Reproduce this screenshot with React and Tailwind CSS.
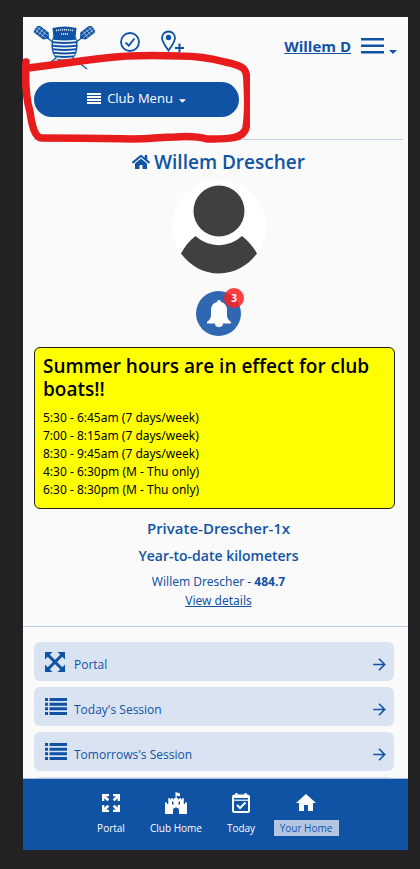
import React from "react";
import { FaHome } from "react-icons/fa";
import { MdHome, MdArrowForward } from "react-icons/md";

const HOURS = [
  "5:30 - 6:45am (7 days/week)",
  "7:00 - 8:15am (7 days/week)",
  "8:30 - 9:45am (7 days/week)",
  "4:30 - 6:30pm (M - Thu only)",
  "6:30 - 8:30pm (M - Thu only)",
];

function Oar({ flip }) {
  return (
    <g transform={flip ? "translate(61 0) scale(-1 1)" : undefined}>
      <path d="M11 10 53 43" stroke="#1053a5" strokeWidth="1.300" />
      <g transform="translate(8 7) rotate(38)">
        <path d="M-8 -4.500H5L8 -1V1L5 4.500H-8z" fill="#1053a5" />
        <path
          d="M-8 -1.500H6M-8 1.500H6M-5 -4V4M-1.500 -4V4M2 -4V4"
          stroke="#fafafa"
          strokeWidth="0.500"
        />
      </g>
    </g>
  );
}

function ClubLogo() {
  return (
    <svg viewBox="0 0 61 44" fill="none" className="h-11 w-[61px]" role="img" aria-label="Rowing club">
      <Oar />
      <Oar flip />
      <path
        d="M20 10c-2.500 5-2.500 9-2 13 .5 4 2 7 5 10l7.500 5 7.500-5c3-3 4.500-6 5-10 .5-4 .5-8-2-13z"
        fill="#1053a5"
        stroke="#1053a5"
        strokeWidth="0.600"
      />
      <path
        d="M19 14.500q11.500 1.500 23 0M19 18q11.500 1.500 23 0M19 21.500q11.500 1.500 23 0M19.500 25q11 1.500 22 0M20.500 28.500q10 1.500 20 0M22.500 32q8 1.500 16 0"
        stroke="#fafafa"
        strokeWidth="1.400"
      />
      <path d="M18.500 2q12-3 24 0l-1 10q-11-2.500-22 0z" fill="#1053a5" />
      <path d="M22 4.500q8.500-1.500 17 0" stroke="#fafafa" strokeWidth="1.300" strokeDasharray="1.200 0.800" />
      <path d="M27 8h7" stroke="#fafafa" strokeWidth="1.300" strokeDasharray="1.200 0.800" />
    </svg>
  );
}

function CheckCircle() {
  return (
    <svg viewBox="0 0 20 20" fill="none" stroke="#1053a5" className="size-5">
      <circle cx="10" cy="10" r="9" strokeWidth="1.800" />
      <path d="M5.500 10.500 8.800 13.600 14.500 6.500" strokeWidth="1.800" />
    </svg>
  );
}

function PinPlus() {
  return (
    <svg viewBox="0 0 24 24" fill="none" stroke="#1053a5" className="size-6">
      <path d="M8.500 20.500C4.500 15 2 11.500 2 8a6.500 6.500 0 0 1 13 0c0 3.500-2.500 7-6.500 12.500z" strokeWidth="1.800" />
      <circle cx="8.500" cy="7.500" r="2.700" fill="#1053a5" stroke="none" />
      <path d="M19.500 13.500v9M15 18h9" strokeWidth="2" />
    </svg>
  );
}

function Caret({ className }) {
  return (
    <svg viewBox="0 0 8 4" fill="currentColor" className={className}>
      <path d="M0 0h8L4 4z" />
    </svg>
  );
}

function Arrows() {
  return (
    <svg viewBox="0 0 20 20" fill="#1053a5" className="size-5">
      <path d="M3 3 17 17M17 3 3 17" stroke="#1053a5" strokeWidth="3" />
      <path d="M0 0h7.500L0 7.500zM20 0v7.500L12.500 0zM0 20v-7.500L7.500 20zM20 20h-7.500L20 12.500z" />
    </svg>
  );
}

function ListIcon() {
  return (
    <svg viewBox="0 0 22 17" fill="#1053a5" className="h-[17px] w-[22px]">
      <path d="M0 0h3v3H0zM4.500 0H22v3H4.500zM0 4.700h3v3H0zM4.500 4.700H22v3H4.500zM0 9.300h3v3H0zM4.500 9.300H22v3H4.500zM0 14h3v3H0zM4.500 14H22v3H4.500z" />
    </svg>
  );
}

function PortalIcon() {
  return (
    <svg viewBox="0 0 18 18" fill="#fff" className="size-[18px]">
      <path d="M0 0h7v2.300H4.200L7.300 5.400 5.400 7.300 2.300 4.200V7H0zM18 0v7h-2.300V4.200L12.600 7.300 10.700 5.400 13.800 2.300H11V0zM0 18v-7h2.300v2.800L5.400 10.700 7.300 12.600 4.200 15.700H7V18zM18 18h-7v-2.300h2.800L10.700 12.600l1.900-1.900 3.100 3.100V11H18z" />
    </svg>
  );
}

function CastleIcon() {
  return (
    <svg viewBox="0 0 22 22" fill="#fff" className="size-[22px]">
      <path d="M10.500 0 15 1.500v2.800l-3.300-.6V6H13v1.300h1.500V6H16v1.300h1.500V6h1.300v6H20v-1.500h2V22h-8v-3.500a3 3 0 0 0-6 0V22H0V10.500h2V12h1.300V6h1.400v1.300h1.500V6h1.500v1.300H9V6h1.500z" />
      <path d="M7 9.500h1.500v3H7zM13.500 9.500H15v3h-1.500z" fill="#1053a5" />
    </svg>
  );
}

function CalendarIcon() {
  return (
    <svg viewBox="0 0 18 20" fill="none" stroke="#fff" className="h-5 w-[18px]">
      <rect x="1" y="2.500" width="16" height="16.500" rx="1.500" strokeWidth="2" />
      <path d="M1 4h16M4.500 0v4M13.500 0v4" strokeWidth="2" />
      <path d="M1 7.200h16" strokeWidth="1.200" />
      <path d="m5 12 3 3 5.500-5.500" strokeWidth="2" />
    </svg>
  );
}

function Bell() {
  return (
    <svg viewBox="0 0 26 28" fill="#fff" className="h-7 w-[26px]">
      <path d="M13 0c1.200 0 2 .8 2 2 4 1 6 4 6 8v5.500c0 2.500 1.500 4.500 4 6.500v1.500H1V22c2.500-2 4-4 4-6.500V10c0-4 2-7 6-8 0-1.200.8-2 2-2z" />
      <path d="M9 23a4 4 0 0 0 8 0z" stroke="#d5e0ef" strokeWidth="0.500" />
    </svg>
  );
}

function Avatar() {
  return (
    <svg viewBox="0 0 94 94" className="size-[94px]" role="img" aria-label="Profile">
      <circle cx="47" cy="47" r="47" fill="#fff" />
      <g fill="#404040">
        <circle cx="47" cy="31" r="25.500" />
        <path d="M23.500 56a34 34 0 0 0 46.500 0q9 7 15 17.500c-9 12-22 20-38 20s-29-8-38-20q5.500-10.500 14.500-17.500z" />
      </g>
    </svg>
  );
}

const LINKS = [
  { label: "Portal", Icon: Arrows },
  { label: "Today's Session", Icon: ListIcon },
  { label: "Tomorrows's Session", Icon: ListIcon },
];

const TABS = [
  { label: "Portal", icon: <PortalIcon /> },
  { label: "Club Home", icon: <CastleIcon /> },
  { label: "Today", icon: <CalendarIcon /> },
  { label: "Your Home", icon: <MdHome size={24} />, active: true },
];

export default function App() {
  return (
    <div className="flex h-screen flex-col bg-[#222224] pt-[17px] pr-3 pb-[19px] pl-[23px] font-['Open_Sans','Noto_Sans',sans-serif] text-[13px] text-[#1053a5]">
      <div className="relative flex min-h-0 flex-1 flex-col bg-[#fafafa]">
        <main className="min-h-0 flex-1 overflow-hidden">
          <header className="mr-[5px] ml-[11px] border-b border-[#c5d3e8] pb-[22px]">
            <div className="flex h-[65px] items-start pt-[9px] pr-1.5">
              <ClubLogo />
              <button aria-label="Check in" className="mt-[6px] ml-[25px]">
                <CheckCircle />
              </button>
              <button aria-label="Add location" className="mt-1 ml-5">
                <PinPlus />
              </button>
              <a href="#profile" className="mt-2 ml-auto text-[15px] leading-6 font-bold underline">
                Willem D
              </a>
              <button aria-label="User menu" className="mt-3 ml-2.5 flex items-end gap-[5px]">
                <svg viewBox="0 0 23 16" fill="currentColor" className="h-4 w-[23px]">
                  <path d="M0 0h23v2.500H0zM0 6.500h23V9H0zM0 13h23v2.500H0z" />
                </svg>
                <Caret className="h-1 w-2" />
              </button>
            </div>
            <button className="flex h-[35px] w-[205px] items-center justify-center rounded-full bg-[#1053a5] pb-0.5 text-[13px] text-white">
              <svg viewBox="0 0 14 11" fill="currentColor" className="mr-1.5 h-[11px] w-3.5">
                <path d="M0 0h14v2H0zM0 3h14v2H0zM0 6h14v2H0zM0 9h14v2H0z" />
              </svg>
              Club Menu
              <Caret className="mt-1 ml-1.5 h-1 w-[7px]" />
            </button>
          </header>

          <section className="mr-[5px] ml-[11px] flex flex-col items-center pt-2.5">
            <h1 className="flex items-center gap-1 text-[19px] leading-6 font-semibold">
              <FaHome size={18} />
              Willem Drescher
            </h1>
            <div className="mt-1.5">
              <Avatar />
            </div>
            <button
              aria-label="Notifications, 3 new"
              className="relative mt-[17px] flex size-[45px] items-center justify-center rounded-full bg-[#2f68b0]"
            >
              <Bell />
              <span className="absolute -top-[3px] -right-[3px] flex size-5 items-center justify-center rounded-full bg-[#ff2020]/85 text-[10px] font-bold text-white">
                3
              </span>
            </button>

            <div className="mt-[11px] mr-2 self-stretch rounded-md border border-[#222] bg-[#ff0] px-2 pt-[7px] pb-[9px] text-black">
              <h2 className="mb-2 text-[19px] leading-[23px] font-semibold">
                Summer hours are in effect for club boats!!
              </h2>
              {HOURS.map((h) => (
                <p key={h} className="font-['Noto_Sans',sans-serif] text-[12px] leading-[18px]">
                  {h}
                </p>
              ))}
            </div>

            <h3 className="mt-[7px] text-[15px] leading-6 font-semibold">Private-Drescher-1x</h3>
            <h4 className="mt-1 text-sm leading-6 font-semibold">Year-to-date kilometers</h4>
            <p className="mt-1 font-['Noto_Sans',sans-serif] text-[12px] leading-5">
              Willem Drescher - <strong>484.7</strong>
            </p>
            <a href="#details" className="font-['Noto_Sans',sans-serif] text-[12px] leading-[18px] underline">
              View details
            </a>
          </section>

          <ul className="mt-4 flex flex-col gap-1.5 border-t border-[#b9cfec] pt-[15px] pr-3.5 pl-[11px]">
            {LINKS.map(({ label, Icon }) => (
              <li key={label}>
                <a href="#list" className="flex h-[39px] items-center rounded-md bg-[#dae3f1] pr-[5px] pl-[11px]">
                  <span className="flex w-[29px]">
                    <Icon />
                  </span>
                  <span className="flex-1 pt-1.5 text-[12px]">{label}</span>
                  <MdArrowForward size={19} className="mt-1.5" />
                </a>
              </li>
            ))}
            <li className="h-[39px] rounded-md bg-[#dae3f1]" />
          </ul>
        </main>

        <nav className="flex h-[72px] shrink-0 justify-center border-t border-[#a9bfdd] bg-[#1053a5] pt-3 pr-3.5 text-white">
          {TABS.map(({ label, icon, active }) => (
            <a key={label} href="#tab" className="flex w-[65px] flex-col items-center gap-[5px]">
              <span className="flex h-6 items-center">{icon}</span>
              <span
                className={
                  active
                    ? "w-full bg-[#b3c7e3] text-center text-[10px] leading-4 text-[#1053a5]"
                    : "text-[10px] leading-4"
                }
              >
                {label}
              </span>
            </a>
          ))}
        </nav>

        <svg
          viewBox="0 0 240 100"
          fill="none"
          className="pointer-events-none absolute top-[33px] -left-[13px] h-[100px] w-60"
          aria-hidden="true"
        >
          <path
            d="M16 12C15 30 16 48 20 62C22 76 25 88 32 88C60 88 90 88 120 89C145 89 150 87 165 87C180 86 190 87 197 89C215 89 233 90 236 78C238 66 238 50 237 32C237 19 235 16 215 12C200 8 185 6 170 6C140 5 110 6 95 8C65 11 40 16 18 18"
            stroke="#e81c1c"
            strokeWidth="7.500"
            strokeLinecap="round"
            strokeLinejoin="round"
          />
        </svg>
      </div>
    </div>
  );
}
